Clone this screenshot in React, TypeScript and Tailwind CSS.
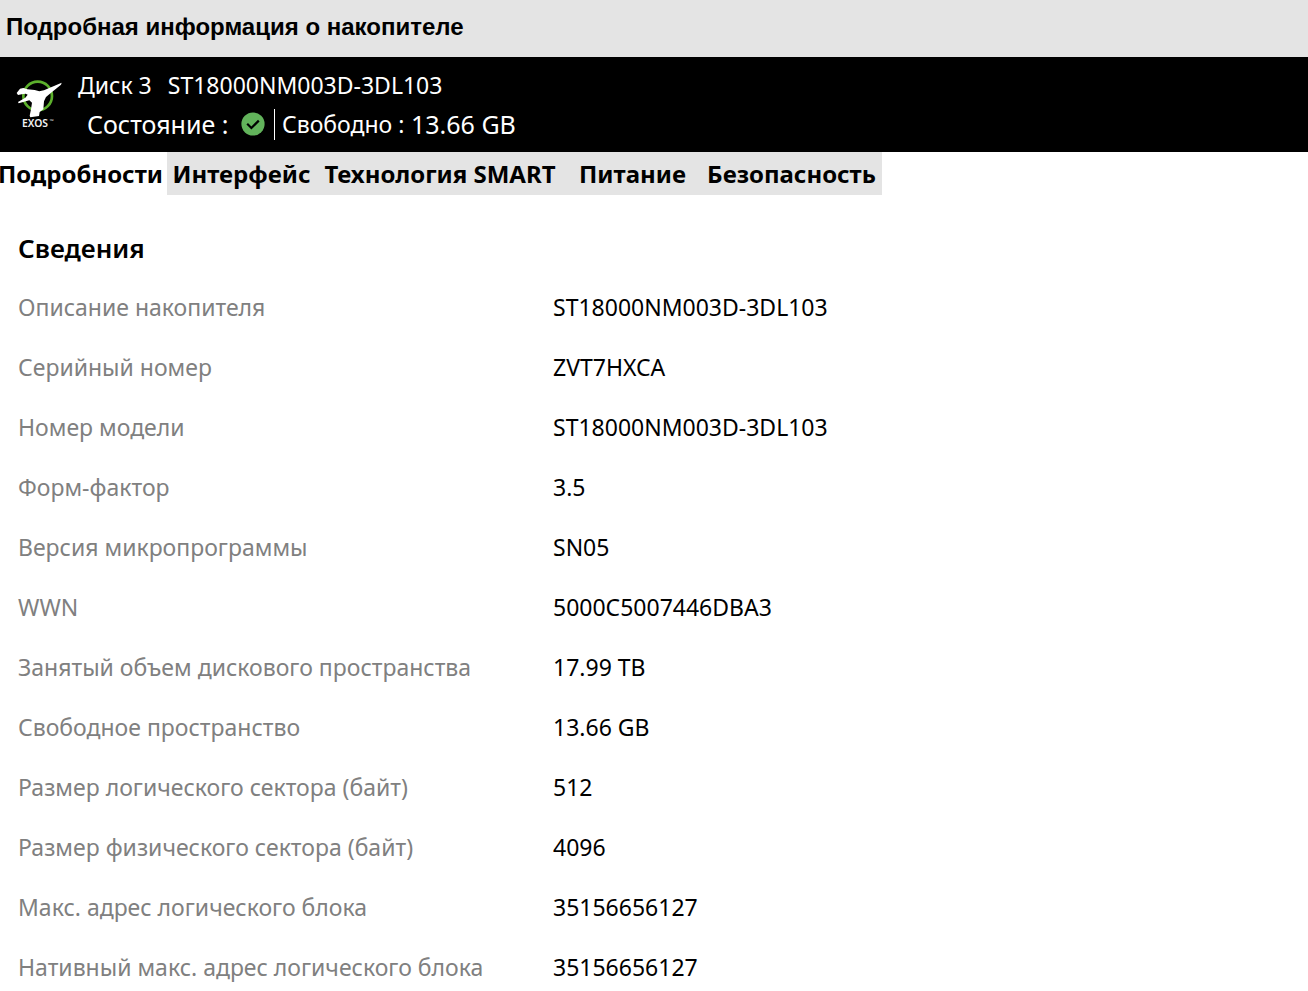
import React from "react";

const tabs = [
  { label: "Подробности", className: "w-[167px] bg-white pr-[6px]" },
  { label: "Интерфейс", className: "w-[149px] bg-[#e4e4e4]" },
  { label: "Технология SMART", className: "w-[248px] bg-[#e4e4e4]" },
  { label: "Питание", className: "w-[137px] bg-[#e4e4e4]" },
  { label: "Безопасность", className: "w-[181px] bg-[#e4e4e4]" },
];

const details = [
  ["Описание накопителя", "ST18000NM003D-3DL103"],
  ["Серийный номер", "ZVT7HXCA"],
  ["Номер модели", "ST18000NM003D-3DL103"],
  ["Форм-фактор", "3.5"],
  ["Версия микропрограммы", "SN05"],
  ["WWN", "5000C5007446DBA3"],
  ["Занятый объем дискового пространства", "17.99 TB"],
  ["Свободное пространство", "13.66 GB"],
  ["Размер логического сектора (байт)", "512"],
  ["Размер физического сектора (байт)", "4096"],
  ["Макс. адрес логического блока", "35156656127"],
  ["Нативный макс. адрес логического блока", "35156656127"],
];

function ExosLogo() {
  return (
    <svg className="h-[52px] w-[50px] shrink-0" viewBox="45 54 150 156" role="img" aria-label="EXOS">
      <circle cx="113" cy="108" r="43" fill="none" stroke="#5cb02c" strokeWidth="8" />
      <path
        d="M50 99 L60 86 L70 84 L82 88 L104 90 L118 94 L132 91 L185 68 L183 74 L156 96 L138 111 L132 124 L130 148 L119 156 L117 168 L91 172 L89 167 L93 148 L96 128 L88 121 L56 130 L54 126 L76 113 L83 104 L77 101 L65 103 L54 105 Z"
        fill="#fff"
      />
      <text x="66" y="202" fill="#f2f2f2" fontFamily="Noto Sans, sans-serif" fontSize="31" fontWeight="600">
        EXOS
      </text>
      <text x="149" y="190" fill="#e0e0e0" fontFamily="Noto Sans, sans-serif" fontSize="15">
        ™
      </text>
    </svg>
  );
}

function StatusOk() {
  return (
    <svg className="h-6 w-6 shrink-0" viewBox="0 0 24 24" role="img" aria-label="OK">
      <circle cx="12" cy="12" r="11.6" fill="#62b35b" />
      <path d="M6.2 11.8 L10.4 16 L17.8 8.6" fill="none" stroke="#000" strokeWidth="2.2" />
    </svg>
  );
}

export default function App() {
  return (
    <div className="min-h-screen bg-white font-['Noto_Sans',sans-serif] text-black">
      <header className="bg-[#e4e4e4] px-[6px] pt-[11px] pb-[14px]">
        <h1 className="font-['Liberation_Sans',sans-serif] text-[24px] leading-[32px] font-bold">
          Подробная информация о накопителе
        </h1>
      </header>

      <section className="flex h-[95px] items-start bg-black pl-[15px] text-white">
        <div className="pt-[21px]">
          <ExosLogo />
        </div>
        <div className="pt-2 pl-[13px] whitespace-pre">
          <div className="flex gap-4 text-[23px] leading-[40px]">
            <span>Диск 3</span>
            <span>ST18000NM003D-3DL103</span>
          </div>
          <div className="flex h-[38px] items-center pl-[9px] text-[25px] leading-[38px]">
            <span className="w-[154px]">Состояние :</span>
            <StatusOk />
            <span className="ml-[9px] h-[31px] border-l border-white" />
            <span className="ml-[7px] w-[129px] text-[23px]">Свободно :</span>
            <span>13.66 GB</span>
          </div>
        </div>
      </section>

      <nav role="tablist" className="flex h-[43px]">
        {tabs.map((tab, i) => (
          <button
            key={tab.label}
            type="button"
            role="tab"
            aria-selected={i === 0}
            className={`flex justify-center pt-[6px] text-[24px] leading-[32px] font-bold whitespace-nowrap ${tab.className}`}
          >
            {tab.label}
          </button>
        ))}
      </nav>

      <main className="px-[18px] pt-[37px]">
        <h2 className="text-[26px] leading-[32px] font-semibold">Сведения</h2>
        <table className="mt-[13px] w-full table-fixed border-collapse text-left text-[23px] leading-[32px]">
          <colgroup>
            <col className="w-[535px]" />
            <col />
          </colgroup>
          <tbody>
            {details.map(([name, value]) => (
              <tr key={name} className="h-[60px]">
                <th scope="row" className="p-0 font-normal text-[#808080]">
                  {name}
                </th>
                <td className="p-0">{value}</td>
              </tr>
            ))}
          </tbody>
        </table>
      </main>
    </div>
  );
}
